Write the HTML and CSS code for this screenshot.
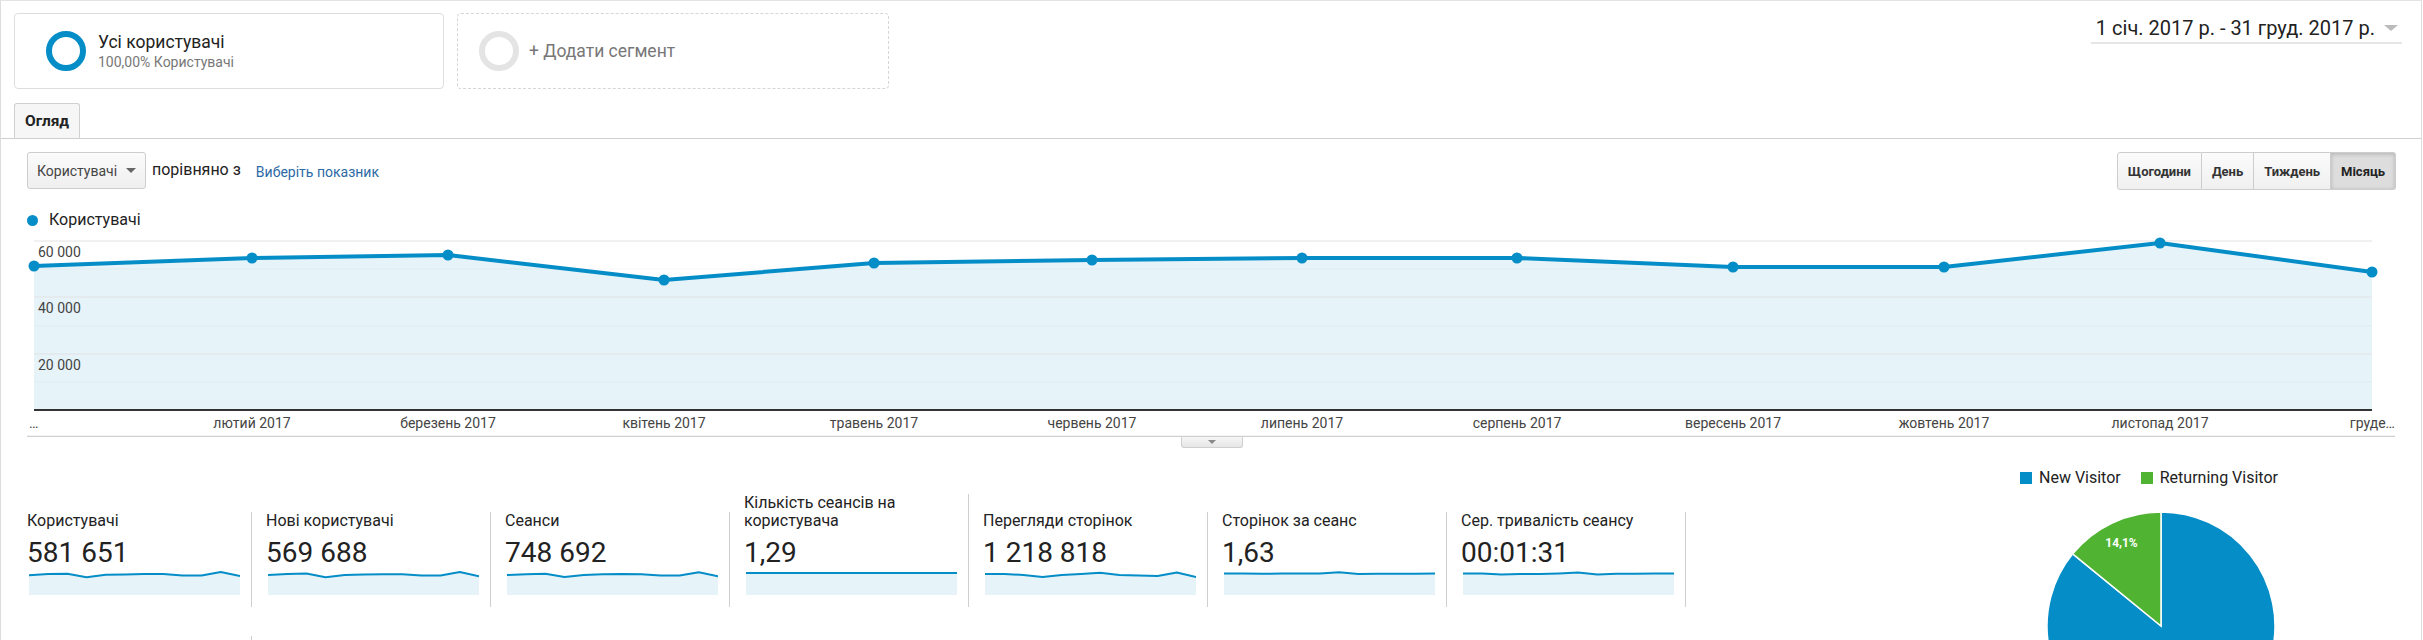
FILE: index.html
```html
<!DOCTYPE html>
<html lang="uk">
<head>
<meta charset="utf-8">
<title>Огляд аудиторії</title>
<link rel="stylesheet" href="styles.css">
</head>
<body>
<div class="page">
  <header class="segbar">
    <div class="segments">
      <div class="seg seg-active">
        <span class="ring ring-blue"></span>
        <div class="seg-text">
          <div class="seg-title">Усі користувачі</div>
          <div class="seg-sub">100,00% Користувачі</div>
        </div>
      </div>
      <div class="seg seg-add">
        <span class="ring ring-gray"></span>
        <span class="seg-add-label">+ Додати сегмент</span>
      </div>
    </div>
    <div class="daterange">
      <span class="date-text">1 січ. 2017 р. - 31 груд. 2017 р.</span>
      <span class="date-caret"></span>
    </div>
  </header>

  <nav class="tabs">
    <div class="tab">Огляд</div>
  </nav>

  <div class="toolbar">
    <div class="tool-left">
      <div class="select">Користувачі<span class="select-caret"></span></div>
      <span class="vs">порівняно з</span>
      <a class="pick">Виберіть показник</a>
    </div>
    <div class="btn-group">
      <span class="btn">Щогодини</span>
      <span class="btn">День</span>
      <span class="btn">Тиждень</span>
      <span class="btn btn-active">Місяць</span>
    </div>
  </div>

  <div class="legend"><span class="legend-dot"></span>Користувачі</div>

  <div class="chart">
    <svg class="chart-svg" width="2420" height="207" viewBox="1 230 2420 207">
      <polygon class="area" points="34,410 34,266 252,258 448,255 664,280 874,263 1092,260 1302,258 1517,258 1733,267 1944,267 2160,243 2372,272 2372,410"/>
      <line class="grid" x1="34" y1="241" x2="2372" y2="241"/>
      <line class="grid-minor" x1="34" y1="269" x2="2372" y2="269"/>
      <line class="grid" x1="34" y1="297" x2="2372" y2="297"/>
      <line class="grid-minor" x1="34" y1="326" x2="2372" y2="326"/>
      <line class="grid" x1="34" y1="354" x2="2372" y2="354"/>
      <line class="grid-minor" x1="34" y1="382" x2="2372" y2="382"/>
      <text class="ylab" x="38" y="257">60 000</text>
      <text class="ylab" x="38" y="313">40 000</text>
      <text class="ylab" x="38" y="370">20 000</text>
      <polyline class="series" points="34,266 252,258 448,255 664,280 874,263 1092,260 1302,258 1517,258 1733,267 1944,267 2160,243 2372,272"/>
      <g class="pts">
        <circle cx="34" cy="266" r="5.5"/><circle cx="252" cy="258" r="5.5"/><circle cx="448" cy="255" r="5.5"/>
        <circle cx="664" cy="280" r="5.5"/><circle cx="874" cy="263" r="5.5"/><circle cx="1092" cy="260" r="5.5"/>
        <circle cx="1302" cy="258" r="5.5"/><circle cx="1517" cy="258" r="5.5"/><circle cx="1733" cy="267" r="5.5"/>
        <circle cx="1944" cy="267" r="5.5"/><circle cx="2160" cy="243" r="5.5"/><circle cx="2372" cy="272" r="5.5"/>
      </g>
      <line class="axis" x1="34" y1="410" x2="2372" y2="410"/>
      <g class="xlab">
        <text x="29" y="428" text-anchor="start">…</text>
        <text x="252" y="428">лютий 2017</text>
        <text x="448" y="428">березень 2017</text>
        <text x="664" y="428">квітень 2017</text>
        <text x="874" y="428">травень 2017</text>
        <text x="1092" y="428">червень 2017</text>
        <text x="1302" y="428">липень 2017</text>
        <text x="1517" y="428">серпень 2017</text>
        <text x="1733" y="428">вересень 2017</text>
        <text x="1944" y="428">жовтень 2017</text>
        <text x="2160" y="428">листопад 2017</text>
        <text x="2395" y="428" text-anchor="end">груде…</text>
      </g>
      <line class="baseline" x1="27" y1="436.5" x2="2395" y2="436.5"/>
    </svg>
    <div class="collapse-row"><span class="collapse"><span class="collapse-caret"></span></span></div>
  </div>

  <section class="overview">
    <div class="metrics">
      <div class="metric-row">
        <div class="metric">
          <div class="m-label">Користувачі</div>
          <div class="m-value">581 651</div>
          <svg class="spark" width="211" height="26" viewBox="0 0 211 26"><polygon class="sp-fill" points="0,26 0,6.2 19.2,5.1 38.4,4.7 57.5,8.2 76.7,5.8 95.9,5.4 115.1,5.1 134.3,5.1 153.5,6.4 172.6,6.4 191.8,3 211,7.1 211,26"/><polyline class="sp-line" points="0,6.2 19.2,5.1 38.4,4.7 57.5,8.2 76.7,5.8 95.9,5.4 115.1,5.1 134.3,5.1 153.5,6.4 172.6,6.4 191.8,3 211,7.1"/></svg>
        </div>
        <div class="metric">
          <div class="m-label">Нові користувачі</div>
          <div class="m-value">569 688</div>
          <svg class="spark" width="211" height="26" viewBox="0 0 211 26"><polygon class="sp-fill" points="0,26 0,6 19.2,5 38.4,4.6 57.5,8.3 76.7,5.9 95.9,5.4 115.1,5.2 134.3,5.2 153.5,6.5 172.6,6.5 191.8,3 211,7.2 211,26"/><polyline class="sp-line" points="0,6 19.2,5 38.4,4.6 57.5,8.3 76.7,5.9 95.9,5.4 115.1,5.2 134.3,5.2 153.5,6.5 172.6,6.5 191.8,3 211,7.2"/></svg>
        </div>
        <div class="metric">
          <div class="m-label">Сеанси</div>
          <div class="m-value">748 692</div>
          <svg class="spark" width="211" height="26" viewBox="0 0 211 26"><polygon class="sp-fill" points="0,26 0,6 19.2,5.2 38.4,4.8 57.5,8 76.7,5.9 95.9,5.3 115.1,5 134.3,5.2 153.5,6.4 172.6,6.4 191.8,3.2 211,7.3 211,26"/><polyline class="sp-line" points="0,6 19.2,5.2 38.4,4.8 57.5,8 76.7,5.9 95.9,5.3 115.1,5 134.3,5.2 153.5,6.4 172.6,6.4 191.8,3.2 211,7.3"/></svg>
        </div>
        <div class="metric">
          <div class="m-label">Кількість сеансів на користувача</div>
          <div class="m-value">1,29</div>
          <svg class="spark" width="211" height="26" viewBox="0 0 211 26"><polygon class="sp-fill" points="0,26 0,4 211,4 211,26"/><polyline class="sp-line" points="0,4 211,4"/></svg>
        </div>
        <div class="metric">
          <div class="m-label">Перегляди сторінок</div>
          <div class="m-value">1 218 818</div>
          <svg class="spark" width="211" height="26" viewBox="0 0 211 26"><polygon class="sp-fill" points="0,26 0,5 19.2,5 38.4,6 57.5,8 76.7,6 95.9,5 115.1,3.8 134.3,6 153.5,6.6 172.6,7 191.8,3.5 211,8 211,26"/><polyline class="sp-line" points="0,5 19.2,5 38.4,6 57.5,8 76.7,6 95.9,5 115.1,3.8 134.3,6 153.5,6.6 172.6,7 191.8,3.5 211,8"/></svg>
        </div>
        <div class="metric">
          <div class="m-label">Сторінок за сеанс</div>
          <div class="m-value">1,63</div>
          <svg class="spark" width="211" height="26" viewBox="0 0 211 26"><polygon class="sp-fill" points="0,26 0,4.5 19.2,4.5 38.4,4.8 57.5,4.5 76.7,4.6 95.9,4.4 115.1,3.2 134.3,5 153.5,4.7 172.6,4.8 191.8,4.8 211,4.6 211,26"/><polyline class="sp-line" points="0,4.5 19.2,4.5 38.4,4.8 57.5,4.5 76.7,4.6 95.9,4.4 115.1,3.2 134.3,5 153.5,4.7 172.6,4.8 191.8,4.8 211,4.6"/></svg>
        </div>
        <div class="metric">
          <div class="m-label">Сер. тривалість сеансу</div>
          <div class="m-value">00:01:31</div>
          <svg class="spark" width="211" height="26" viewBox="0 0 211 26"><polygon class="sp-fill" points="0,26 0,4.5 19.2,4.6 38.4,5.4 57.5,5 76.7,5 95.9,4.4 115.1,3.5 134.3,5.6 153.5,4.8 172.6,4.8 191.8,4.4 211,4.4 211,26"/><polyline class="sp-line" points="0,4.5 19.2,4.6 38.4,5.4 57.5,5 76.7,5 95.9,4.4 115.1,3.5 134.3,5.6 153.5,4.8 172.6,4.8 191.8,4.4 211,4.4"/></svg>
        </div>
      </div>
      <div class="metric-row metric-row-2">
        <div class="metric metric-next"></div>
      </div>
    </div>

    <div class="pie-block">
      <div class="pie-legend">
        <span class="pl-item"><span class="pl-sq pl-new"></span>New Visitor</span>
        <span class="pl-item"><span class="pl-sq pl-ret"></span>Returning Visitor</span>
      </div>
      <svg class="pie" width="230" height="240" viewBox="0 0 230 240">
        <path class="slice-new" d="M115,115 L115,1 A114,114 0 1 1 26.7,42.9 Z"/>
        <path class="slice-ret" d="M115,115 L115,1 A114,114 0 0 0 26.7,42.9 Z"/>
        <text class="pie-label" x="75.5" y="36">14,1%</text>
      </svg>
    </div>
  </section>
</div>
</body>
</html>
```

FILE: styles.css
```css
* { box-sizing: border-box; }

html, body {
  margin: 0;
  padding: 0;
  background: #fff;
  overflow: hidden;
}

body {
  font-family: Roboto, "Liberation Sans", sans-serif;
  color: #222;
}

.page {
  width: 2422px;
  height: 640px;
  overflow: hidden;
  border-left: 1px solid #ddd;
  border-right: 1px solid #ddd;
  border-top: 1px solid #e3e3e3;
  background: #fff;
}

/* ---------- segment bar ---------- */
.segbar {
  display: flex;
  justify-content: space-between;
  align-items: flex-start;
  padding: 12px 19px 0 13px;
}

.segments {
  display: flex;
  gap: 13px;
}

.seg {
  display: flex;
  align-items: center;
  height: 76px;
  border-radius: 4px;
}

.seg-active {
  width: 430px;
  border: 1px solid #dedede;
  padding-left: 31px;
  gap: 12px;
}

.seg-add {
  width: 432px;
  border: 1px dashed #d6d6d6;
  padding-left: 21px;
  gap: 10px;
}

.ring {
  width: 40px;
  height: 40px;
  border-radius: 50%;
  flex: none;
}

.ring-blue { border: 6px solid #058dc7; }
.ring-gray { border: 6px solid #e4e4e4; }

.seg-title {
  font-size: 17.5px;
  line-height: 22px;
  color: #222;
}

.seg-sub {
  font-size: 14px;
  line-height: 18px;
  color: #777;
}

.seg-add-label {
  font-size: 17.5px;
  color: #777;
}

.daterange {
  display: flex;
  align-items: center;
  gap: 9px;
  padding: 3px 4px 2px 5px;
  border-bottom: 2px solid #e6e6e6;
}

.date-text {
  font-size: 20px;
  line-height: 24px;
  color: #222;
}

.date-caret {
  width: 0;
  height: 0;
  border-left: 7px solid transparent;
  border-right: 7px solid transparent;
  border-top: 6px solid #bbb;
}

/* ---------- tabs ---------- */
.tabs {
  margin-top: 14px;
  padding-left: 13px;
  border-bottom: 1px solid #cfcfcf;
  display: flex;
}

.tab {
  height: 35px;
  padding: 0 10px;
  display: flex;
  align-items: center;
  font-size: 15.5px;
  font-weight: 700;
  color: #222;
  background: #f6f6f6;
  border: 1px solid #d0d0d0;
  border-bottom: none;
  border-radius: 3px 3px 0 0;
}

/* ---------- toolbar ---------- */
.toolbar {
  display: flex;
  justify-content: space-between;
  align-items: flex-start;
  padding: 13px 25px 0 26px;
}

.tool-left {
  display: flex;
  align-items: center;
}

.select {
  width: 119px;
  height: 37px;
  display: flex;
  align-items: center;
  justify-content: space-between;
  padding: 0 9px 0 9px;
  font-size: 14px;
  color: #444;
  border: 1px solid #cdcdcd;
  border-radius: 3px;
  background: linear-gradient(#fbfbfb, #efefef);
}

.select-caret {
  width: 0;
  height: 0;
  border-left: 5px solid transparent;
  border-right: 5px solid transparent;
  border-top: 5px solid #666;
}

.vs {
  margin-left: 6px;
  font-size: 16px;
  color: #222;
  position: relative;
  top: -1px;
}

.pick {
  margin-left: 15px;
  font-size: 14px;
  color: #2d6aa6;
  text-decoration: none;
  position: relative;
  top: 1px;
}

.btn-group {
  display: flex;
  height: 38px;
}

.btn {
  display: flex;
  align-items: center;
  padding: 0 10px;
  font-size: 13px;
  font-weight: 700;
  color: #333;
  background: linear-gradient(#fbfbfb, #f0f0f0);
  border: 1px solid #cdcdcd;
  border-left: none;
}

.btn:first-child {
  border-left: 1px solid #cdcdcd;
  border-radius: 3px 0 0 3px;
}

.btn:last-child {
  border-radius: 0 3px 3px 0;
}

.btn-active {
  background: #dddddd;
  box-shadow: inset 0 1px 4px rgba(0, 0, 0, 0.2);
  color: #222;
}

/* ---------- legend ---------- */
.legend {
  margin-top: 20px;
  padding-left: 26px;
  display: flex;
  align-items: center;
  gap: 11px;
  font-size: 16px;
  line-height: 20px;
  color: #222;
}

.legend-dot {
  width: 11px;
  height: 11px;
  border-radius: 50%;
  background: #058dc7;
}

/* ---------- chart ---------- */
.chart-svg {
  display: block;
}

.area { fill: #058dc7; fill-opacity: 0.1; }
.grid { stroke: #e2e2e2; stroke-width: 1; }
.grid-minor { stroke: #000; stroke-opacity: 0.035; stroke-width: 1; }
.series { fill: none; stroke: #058dc7; stroke-width: 4; stroke-linejoin: round; }
.pts circle { fill: #058dc7; }
.axis { stroke: #333; stroke-width: 2; }
.baseline { stroke: #d0d0d0; stroke-width: 1.5; }

.ylab {
  font-family: Roboto, "Liberation Sans", sans-serif;
  font-size: 14px;
  fill: #444;
}

.xlab text {
  font-family: Roboto, "Liberation Sans", sans-serif;
  font-size: 14px;
  fill: #444;
  text-anchor: middle;
}

.xlab text[text-anchor="start"] { text-anchor: start; }
.xlab text[text-anchor="end"] { text-anchor: end; }

.collapse-row {
  width: 2395px;
  padding-left: 27px;
  display: flex;
  justify-content: center;
}

.collapse {
  width: 62px;
  height: 11px;
  display: flex;
  justify-content: center;
  align-items: center;
  background: linear-gradient(#f6f6f6, #e6e6e6);
  border: 1px solid #cfcfcf;
  border-top: none;
  border-radius: 0 0 3px 3px;
}

.collapse-caret {
  width: 0;
  height: 0;
  border-left: 4px solid transparent;
  border-right: 4px solid transparent;
  border-top: 4px solid #888;
}

/* ---------- overview ---------- */
.overview {
  display: flex;
  align-items: flex-start;
  padding-left: 12px;
}

.metrics {
  margin-top: 46px;
  display: flex;
  flex-direction: column;
}

.metric-row {
  display: flex;
  align-items: flex-end;
}

.metric-row-2 {
  margin-top: 29px;
}

.metric {
  width: 239px;
  padding: 0 0 12px 14px;
  border-right: 1px solid #cfcfcf;
}

.metric-next {
  height: 90px;
}

.m-label {
  font-size: 16px;
  line-height: 18px;
  color: #222;
  padding-right: 20px;
}

.m-value {
  margin-top: 7px;
  font-size: 28px;
  line-height: 32px;
  color: #222;
}

.spark {
  display: block;
  margin-left: 2px;
}

.sp-fill { fill: #058dc7; fill-opacity: 0.1; }
.sp-line { fill: none; stroke: #058dc7; stroke-width: 2; stroke-linejoin: round; }

.pie-block {
  margin-left: 334px;
  display: flex;
  flex-direction: column;
}

.pie-legend {
  margin-top: 21px;
  display: flex;
  gap: 20px;
  font-size: 16px;
  line-height: 18px;
  color: #222;
}

.pl-item {
  display: flex;
  align-items: center;
  gap: 7px;
}

.pl-sq {
  width: 12px;
  height: 12px;
}

.pl-new { background: #058dc7; }
.pl-ret { background: #50b432; }

.pie {
  display: block;
  margin-top: 24px;
  margin-left: 26px;
}

.slice-new { fill: #058dc7; stroke: #fff; stroke-width: 1.5; }
.slice-ret { fill: #50b432; stroke: #fff; stroke-width: 1.5; }

.pie-label {
  font-family: Roboto, "Liberation Sans", sans-serif;
  font-size: 12px;
  font-weight: 700;
  fill: #fff;
  text-anchor: middle;
}
```
